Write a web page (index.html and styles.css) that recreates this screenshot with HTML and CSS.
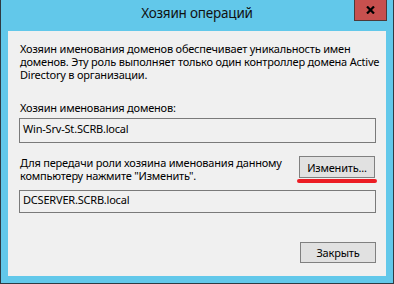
FILE: index.html
```html
<!DOCTYPE html>
<html lang="ru">
<head>
  <meta charset="UTF-8">
  <title>Хозяин операций</title>
  <link rel="stylesheet" href="styles.css">
</head>
<body>
  <div class="window">
    <!-- Title bar -->
    <div class="titlebar">
      <span class="title">Хозяин операций</span>
      <div class="close-btn">
        <svg width="9" height="8" viewBox="0 0 9 8">
          <path d="M1 0.5 L8 7.5 M8 0.5 L1 7.5" stroke="#000" stroke-width="2.2"/>
        </svg>
      </div>
    </div>

    <!-- Client area -->
    <div class="client">
      <p class="info">Хозяин именования доменов обеспечивает уникальность имен<br>доменов. Эту роль выполняет только один контроллер домена Active<br>Directory в организации.</p>

      <label class="field-label">Хозяин именования доменов:</label>
      <div class="textbox tb-current">Win-Srv-St.SCRB.local</div>

      <div class="change-row">
        <p class="change-text">Для передачи роли хозяина именования данному<br>компьютеру нажмите "Изменить".</p>
        <div class="change-col">
          <button type="button" class="btn btn-change">Изменить...</button>
          <div class="marker"></div>
        </div>
      </div>

      <div class="textbox tb-target">DCSERVER.SCRB.local</div>

      <div class="footer">
        <button type="button" class="btn btn-close">Закрыть</button>
      </div>
    </div>
  </div>
</body>
</html>
```

FILE: styles.css
```css
html, body {
  margin: 0;
  padding: 0;
}
body {
  font-family: "Noto Sans", "Open Sans", sans-serif;
  font-size: 11px;
  letter-spacing: -0.2px;
  color: #000;
  background: #62c8ea;
}
.window {
  width: 394px;
  height: 284px;
  box-sizing: border-box;
  background: #62c8ea;
  border: 1px solid #2e3a42;
  border-top: none;
  padding: 0 7px 7px;
  display: flex;
  flex-direction: column;
}
.titlebar {
  height: 31px;
  flex: none;
  position: relative;
  display: flex;
  justify-content: center;
  align-items: flex-start;
}
.title {
  font-size: 13.5px;
  line-height: 20px;
  padding-top: 3px;
  color: #111;
}
.close-btn {
  position: absolute;
  top: 0;
  right: -1px;
  width: 33px;
  height: 21px;
  box-sizing: border-box;
  background: #c7504e;
  border: 1px solid #4d3a3a;
  border-top: none;
  display: flex;
  justify-content: center;
  align-items: center;
}
.client {
  flex: 1;
  background: #f0f0f0;
  padding: 11px 10px 13px 11px;
  display: flex;
  flex-direction: column;
  line-height: 13px;
}
.info {
  margin: 0 0 0 1px;
  white-space: nowrap;
}
.field-label {
  display: block;
  margin: 20px 0 0 1px;
}
.textbox {
  box-sizing: border-box;
  border: 1px solid #7a7a7a;
  background: #f0f0f0;
  padding: 2px 3px 0;
}
.tb-current {
  height: 25px;
  margin-top: 4px;
  padding-top: 3px;
}
.change-row {
  display: flex;
  justify-content: space-between;
  align-items: flex-start;
  margin-top: 13px;
}
.change-text {
  margin: 0 0 0 1px;
  white-space: nowrap;
}
.change-col {
  width: 80px;
  margin-right: -1px;
  display: flex;
  flex-direction: column;
  align-items: center;
}
.btn {
  font-family: inherit;
  font-size: 11px;
  letter-spacing: -0.2px;
  color: #000;
  background: #e1e1e1;
  border: 1px solid #808080;
  border-radius: 0;
  padding: 0;
  width: 76px;
}
.btn-change {
  height: 22px;
}
.marker {
  width: 80px;
  height: 4px;
  margin-top: 1px;
  background: #ec1c24;
  border-radius: 2px;
}
.tb-target {
  height: 23px;
  margin-top: 7px;
}
.footer {
  margin-top: auto;
  display: flex;
  justify-content: flex-end;
}
.btn-close {
  height: 21px;
}
```
